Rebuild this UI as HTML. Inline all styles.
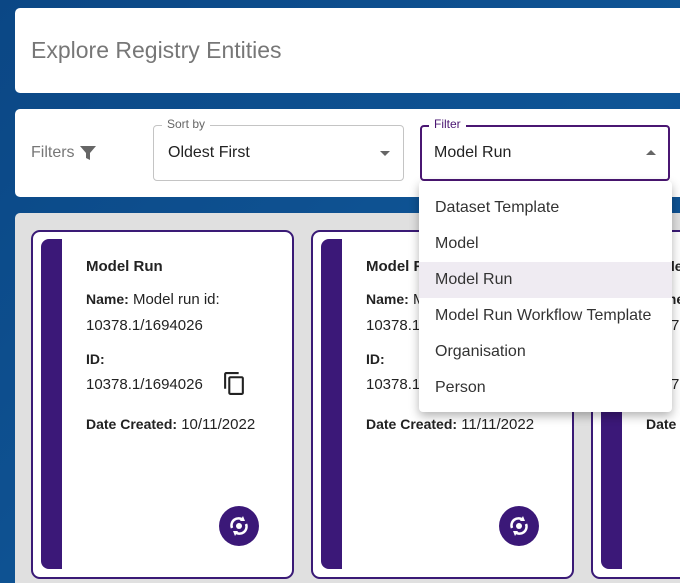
<!DOCTYPE html>
<html style="width:680px;height:583px;overflow:hidden"><head><style>
*{margin:0;padding:0;box-sizing:border-box}
body{width:680px;height:583px;overflow:hidden;background:linear-gradient(135deg,#0b4785,#0f5596 60%,#0c4a8c);font-family:"Liberation Sans",sans-serif;position:relative}
.abs{position:absolute}
.panel{background:#fff;border-radius:5px}
.card{position:absolute;top:230px;width:263px;height:349px;background:#fff;border:2px solid #3a1a76;border-radius:9px}
.bar{position:absolute;left:8px;top:7px;width:21px;height:330px;background:#3b1878;border-radius:8px 0 0 8px}
.t{position:absolute;left:53px;font-size:15px;color:#222}
.b{font-weight:bold;font-size:14px}
.btn{position:absolute;left:186px;top:274px;width:40px;height:40px;border-radius:50%;background:#3b1878}
.item{position:absolute;left:0;width:253px;height:36px;line-height:36px;padding-left:16px;font-size:16px;color:#333}
</style></head><body>
<div class="abs panel" style="left:15px;top:8px;width:670px;height:85px"><div class="abs" style="left:16px;top:29px;font-size:23px;color:#777">Explore Registry Entities</div></div>
<div class="abs panel" style="left:15px;top:109px;width:670px;height:88px">
 <div class="abs" style="left:16px;top:35px;font-size:16px;color:#777">Filters</div>
 <svg class="abs" style="left:64px;top:35px" width="18" height="18" viewBox="0 0 18 18"><path d="M1 2h16l-6 7v7l-4-2V9z" fill="#666"/></svg>
 <div class="abs" style="left:138px;top:16px;width:251px;height:56px;border:1px solid #c4c4c4;border-radius:4px"></div>
 <div class="abs" style="left:147px;top:8px;background:#fff;padding:0 5px;font-size:12px;color:#666">Sort by</div>
 <div class="abs" style="left:153px;top:35px;font-size:16px;color:#222">Oldest First</div>
 <div class="abs" style="left:365px;top:42px;border:5px solid transparent;border-top-color:#666"></div>
 <div class="abs" style="left:405px;top:16px;width:250px;height:56px;border:2px solid #4a1672;border-radius:4px"></div>
 <div class="abs" style="left:414px;top:8px;background:#fff;padding:0 5px;font-size:12px;color:#4a1672">Filter</div>
 <div class="abs" style="left:419px;top:35px;font-size:16px;color:#222">Model Run</div>
 <div class="abs" style="left:631px;top:36px;border:5px solid transparent;border-bottom-color:#666"></div>
</div>
<div class="abs" style="left:15px;top:213px;width:665px;height:370px;background:#e0e0e0;border-radius:5px 0 0 0"></div>
<div class="card" style="left:31px">
 <div class="bar"></div>
 <div class="t b" style="top:26px;font-size:15px">Model Run</div>
 <div class="t" style="top:59px"><b style="font-size:14px">Name:</b> Model run id:</div>
 <div class="t" style="top:85px">10378.1/1694026</div>
 <div class="t b" style="top:119px">ID:</div>
 <div class="t" style="top:144px">10378.1/1694026</div>
 <svg class="abs" style="left:189px;top:139px" width="25" height="25" viewBox="0 0 24 24"><path d="M16 1H4c-1.1 0-2 .9-2 2v14h2V3h12V1zm3 4H8c-1.1 0-2 .9-2 2v14c0 1.1.9 2 2 2h11c1.1 0 2-.9 2-2V7c0-1.1-.9-2-2-2zm0 16H8V7h11v14z" fill="#222"/></svg>
 <div class="t" style="top:184px"><b style="font-size:14px">Date Created:</b> 10/11/2022</div>
 <div class="btn"><svg width="40" height="40" viewBox="0 0 40 40"><path d="M13 22a7 7 0 0 1 11-8M27 18a7 7 0 0 1-11 8" stroke="#fff" stroke-width="2.5" fill="none"/><path d="M24 10l2 5-5 0z M16 30l-2-5 5 0z" fill="#fff"/><circle cx="20" cy="20" r="3" fill="#fff"/></svg></div>
</div>
<div class="card" style="left:311px">
 <div class="bar"></div>
 <div class="t b" style="top:26px;font-size:15px">Model Run</div>
 <div class="t" style="top:59px"><b style="font-size:14px">Name:</b> Model run id:</div>
 <div class="t" style="top:85px">10378.1/1694027</div>
 <div class="t b" style="top:119px">ID:</div>
 <div class="t" style="top:144px">10378.1/1694027</div>
 <div class="t" style="top:184px"><b style="font-size:14px">Date Created:</b> 11/11/2022</div>
 <div class="btn"><svg width="40" height="40" viewBox="0 0 40 40"><path d="M13 22a7 7 0 0 1 11-8M27 18a7 7 0 0 1-11 8" stroke="#fff" stroke-width="2.5" fill="none"/><path d="M24 10l2 5-5 0z M16 30l-2-5 5 0z" fill="#fff"/><circle cx="20" cy="20" r="3" fill="#fff"/></svg></div>
</div>
<div class="card" style="left:591px">
 <div class="bar"></div>
 <div class="t b" style="top:26px">Model Run</div>
 <div class="t" style="top:59px"><b style="font-size:14px">Name:</b> M</div>
 <div class="t" style="top:85px">10378.1/1694028</div>
 <div class="t b" style="top:119px">ID:</div>
 <div class="t" style="top:144px">10378.1/1694028</div>
 <div class="t" style="top:184px"><b style="font-size:14px">Date Created:</b></div>
</div>
<div class="abs" style="left:419px;top:181px;width:253px;height:231px;background:#fff;border-radius:4px;box-shadow:0 4px 10px rgba(0,0,0,.3)">
 <div class="item" style="top:9px">Dataset Template</div>
 <div class="item" style="top:45px">Model</div>
 <div class="item" style="top:81px;background:#efebf2">Model Run</div>
 <div class="item" style="top:117px">Model Run Workflow Template</div>
 <div class="item" style="top:153px">Organisation</div>
 <div class="item" style="top:189px">Person</div>
</div>
</body></html>
